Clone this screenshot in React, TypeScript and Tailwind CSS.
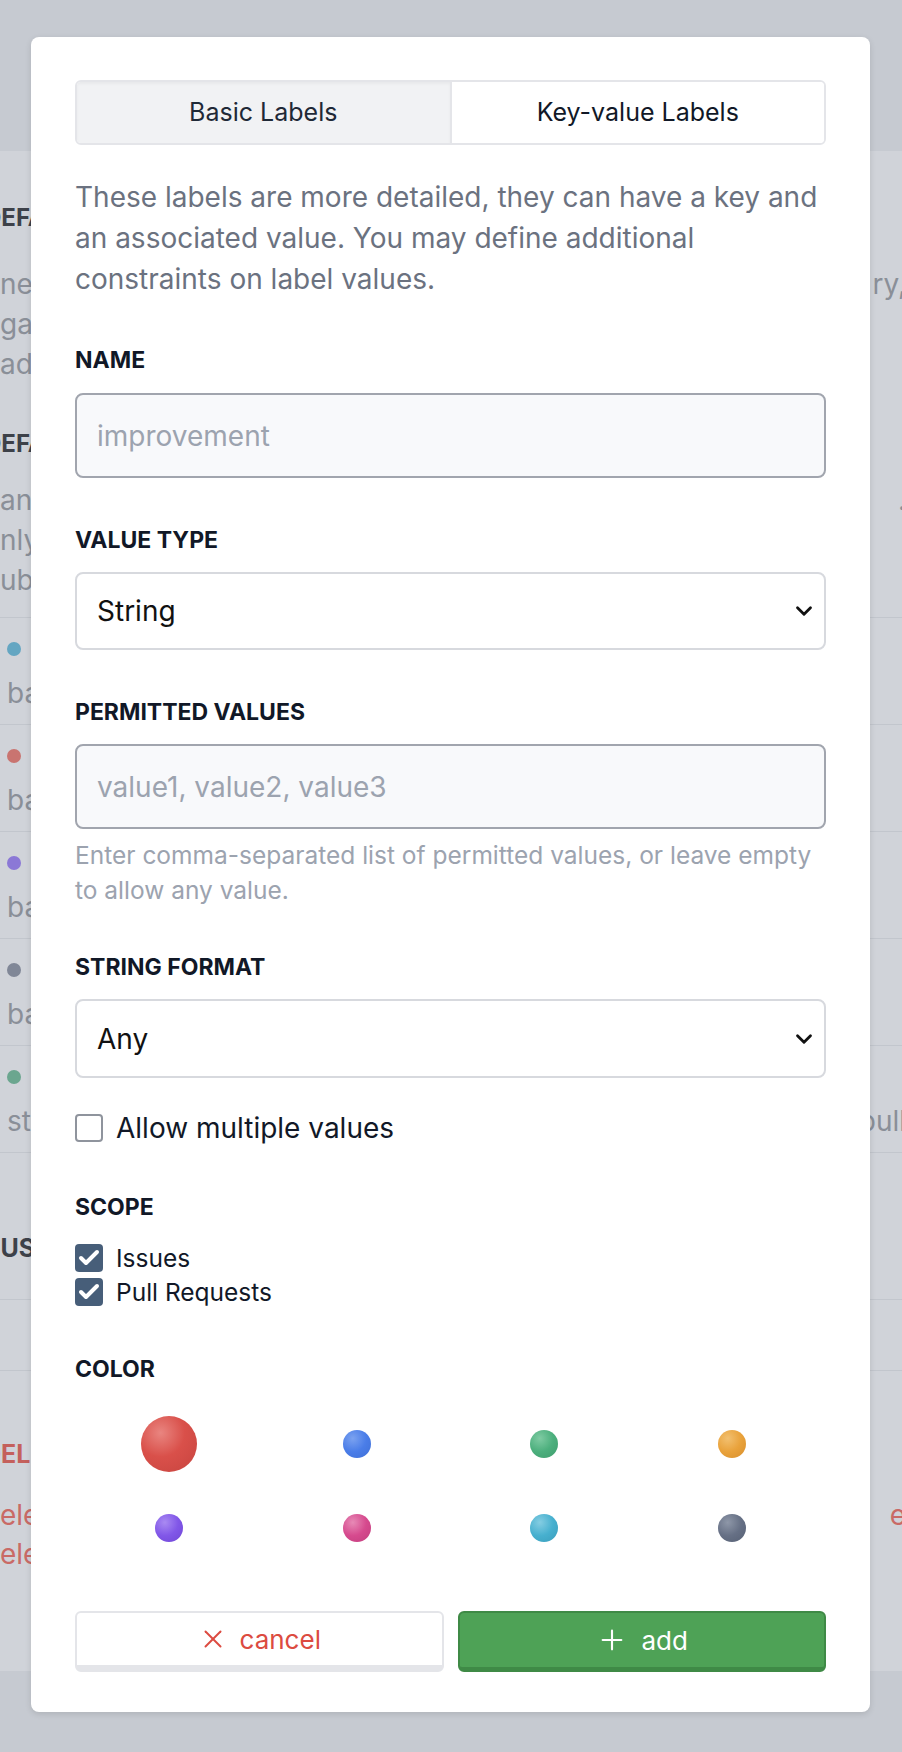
import { Check, ChevronDown, Plus, X } from 'lucide-react';

const colors = [
  { name: 'red', cls: 'bg-[radial-gradient(circle_at_35%_30%,#e98580,#d9504a_45%,#c7443f)]', selected: true },
  { name: 'blue', cls: 'bg-[radial-gradient(circle_at_35%_30%,#7ba2f0,#4a7de8_50%,#3f6fd6)]' },
  { name: 'green', cls: 'bg-[radial-gradient(circle_at_35%_30%,#7fcba3,#4caf7d_50%,#3f9c6c)]' },
  { name: 'orange', cls: 'bg-[radial-gradient(circle_at_35%_30%,#f2c070,#e9a23b_50%,#d88f2c)]' },
  { name: 'purple', cls: 'bg-[radial-gradient(circle_at_35%_30%,#a98af2,#8157e8_50%,#7047d6)]' },
  { name: 'pink', cls: 'bg-[radial-gradient(circle_at_35%_30%,#e78ab6,#d64a8e_50%,#c23e7d)]' },
  { name: 'cyan', cls: 'bg-[radial-gradient(circle_at_35%_30%,#85cde2,#47b0cf_50%,#3a9dbb)]' },
  { name: 'slate', cls: 'bg-[radial-gradient(circle_at_35%_30%,#8e97a8,#667085_50%,#566074)]' },
];

const bgRows = [
  { dot: 'bg-[#64a6c2]', left: 'ba', right: '' },
  { dot: 'bg-[#c97470]', left: 'ba', right: '' },
  { dot: 'bg-[#8b78d6]', left: 'ba', right: '' },
  { dot: 'bg-[#808797]', left: 'ba', right: '' },
  { dot: 'bg-[#6ba68f]', left: 'str', right: 'pull' },
];

function BgLine({ left, right, className = '' }: { left: string; right?: string; className?: string }) {
  return (
    <div className={`flex h-[40px] items-center justify-between text-[28px] leading-[40px] ${className}`}>
      <span>{left}</span>
      <span className="-mr-[4px]">{right}</span>
    </div>
  );
}

function Label({ children, className = '' }: { children: React.ReactNode; className?: string }) {
  return (
    <div className={`text-[23px] font-bold uppercase leading-[32px] text-[#111827] ${className}`}>{children}</div>
  );
}

function CheckRow({ label }: { label: string }) {
  return (
    <div className="flex h-[34px] items-center gap-[13px]">
      <span className="grid h-[28px] w-[28px] place-items-center rounded-[4px] bg-[#475e79]">
        <Check size={24} strokeWidth={4} className="text-white" />
      </span>
      <span className="text-[24.5px] text-[#111827]">{label}</span>
    </div>
  );
}

export default function App() {
  return (
    <div className="relative h-[1752px] w-[902px] overflow-hidden bg-[#c6cad1] font-['Inter',sans-serif]">
      {/* page behind the overlay */}
      <div className="h-[151px]" />
      <div className="h-[1520px] overflow-hidden bg-[#d0d3d9] pt-[47px]">
        <div className="-ml-[16px] h-[40px] text-[24px] font-bold leading-[40px] text-[#3d4149]">DEFAULT LABELS</div>
        <div className="mt-[26px] text-[#8a8f98]">
          <BgLine left="ne" right="ry," />
          <BgLine left="gai" />
          <BgLine left="ad" />
        </div>
        <div className="-ml-[16px] mt-[40px] h-[40px] text-[24px] font-bold leading-[40px] text-[#3d4149]">DEFAULT KEY-VALUE</div>
        <div className="mt-[16px] text-[#8a8f98]">
          <BgLine left="an" right="." />
          <BgLine left="nly" />
          <BgLine left="ubs" />
        </div>
        <div className="mt-[17px] border-b border-[#c2c6cd]">
          {bgRows.map((r, i) => (
            <div key={i} className="h-[107px] border-t border-[#c2c6cd] pl-[7px]">
              <div className={`mt-[24px] h-[14px] w-[14px] rounded-full ${r.dot}`} />
              <BgLine left={r.left} right={r.right} className="mt-[17px] text-[#8a8f98]" />
            </div>
          ))}
        </div>
        <div className="-ml-[18px] mt-[75px] h-[40px] text-[25px] font-bold leading-[40px] text-[#3d4149]">CUSTOM</div>
        <div className="mt-[31px] h-[72px] border-y border-[#c2c6cd]" />
        <div className="-ml-[17px] mt-[63px] h-[40px] text-[25px] font-bold leading-[40px] text-[#c4605c]">DELETE</div>
        <div className="mt-[21px] text-[#c96a66]">
          <BgLine left="ele" right="e" />
          <BgLine left="ele" className="-mt-[1px]" />
        </div>
      </div>

      {/* modal */}
      <div className="absolute left-[31px] top-[37px] w-[839px] rounded-[8px] bg-white px-[44px] pb-[40px] pt-[43px] shadow-[0_2px_6px_rgba(0,0,0,0.12)]">
        <div className="flex h-[65px] overflow-hidden rounded-[6px] border-2 border-[#e4e5e9]">
          <div className="grid flex-1 place-items-center bg-[#f1f2f4] text-[25px] text-[#1f2937] shadow-[inset_0_2px_3px_rgba(0,0,0,0.04)]">
            Basic Labels
          </div>
          <div className="grid flex-1 place-items-center border-l-2 border-[#e4e5e9] bg-white text-[25px] text-[#111827]">
            Key-value Labels
          </div>
        </div>

        <p className="mt-[32px] text-[28px] leading-[41px] text-[#6b7280]">
          These labels are more detailed, they can have a key and
          <br />
          an associated value. You may define additional
          <br />
          constraints on label values.
        </p>

        <Label className="mt-[44px]">Name</Label>
        <input
          readOnly
          placeholder="improvement"
          className="mt-[17px] block h-[85px] w-full rounded-[8px] border-2 border-[#a1a5ae] bg-[#f8f9fb] px-[20px] text-[28px] outline-none placeholder:text-[#9ca3af]"
        />

        <Label className="mt-[46px]">Value Type</Label>
        <div className="mt-[16px] flex h-[78px] items-center justify-between rounded-[8px] border-2 border-[#d7d9de] bg-white pl-[20px] pr-[7px] text-[28px] text-[#111]">
          <span>String</span>
          <ChevronDown size={26} strokeWidth={2.6} className="text-[#111]" />
        </div>

        <Label className="mt-[46px]">Permitted Values</Label>
        <input
          readOnly
          placeholder="value1, value2, value3"
          className="mt-[16px] block h-[85px] w-full rounded-[8px] border-2 border-[#a1a5ae] bg-[#f8f9fb] px-[20px] text-[28px] outline-none placeholder:text-[#9ca3af]"
        />
        <p className="mt-[9px] text-[24.5px] leading-[35px] text-[#9ca3af]">
          Enter comma-separated list of permitted values, or leave empty to allow any value.
        </p>

        <Label className="mt-[43px]">String Format</Label>
        <div className="mt-[16px] flex h-[79px] items-center justify-between rounded-[8px] border-2 border-[#d7d9de] bg-white pl-[20px] pr-[7px] text-[28px] text-[#111]">
          <span>Any</span>
          <ChevronDown size={26} strokeWidth={2.6} className="text-[#111]" />
        </div>

        <div className="mt-[30px] flex h-[40px] items-center gap-[13px]">
          <span className="h-[28px] w-[28px] rounded-[4px] border-2 border-[#8f949d] bg-white" />
          <span className="text-[28px] text-[#111827]">Allow multiple values</span>
        </div>

        <Label className="mt-[43px]">Scope</Label>
        <div className="mt-[18px]">
          <CheckRow label="Issues" />
          <CheckRow label="Pull Requests" />
        </div>

        <Label className="mt-[44px]">Color</Label>
        <div className="mt-[31px] grid grid-cols-4 gap-y-[28px]">
          {colors.map((c) => (
            <div key={c.name} className="flex h-[56px] items-center justify-center">
              <span
                className={`rounded-full ${c.cls} ${c.selected ? 'h-[56px] w-[56px]' : 'h-[28px] w-[28px]'}`}
              />
            </div>
          ))}
        </div>

        <div className="mt-[55px] flex gap-[14px]">
          <button className="flex h-[61px] flex-1 items-center justify-center gap-[12px] rounded-[6px] border-2 border-b-[7px] border-[#e4e5e9] bg-white text-[26px] text-[#dc4b41]">
            <X size={30} strokeWidth={1.6} />
            cancel
          </button>
          <button className="flex h-[61px] flex-1 items-center justify-center gap-[14px] rounded-[6px] border-2 border-b-[5px] border-[#3f8a46] bg-[#4ea256] text-[26px] text-white">
            <Plus size={32} strokeWidth={1.6} />
            add
          </button>
        </div>
      </div>
    </div>
  );
}
